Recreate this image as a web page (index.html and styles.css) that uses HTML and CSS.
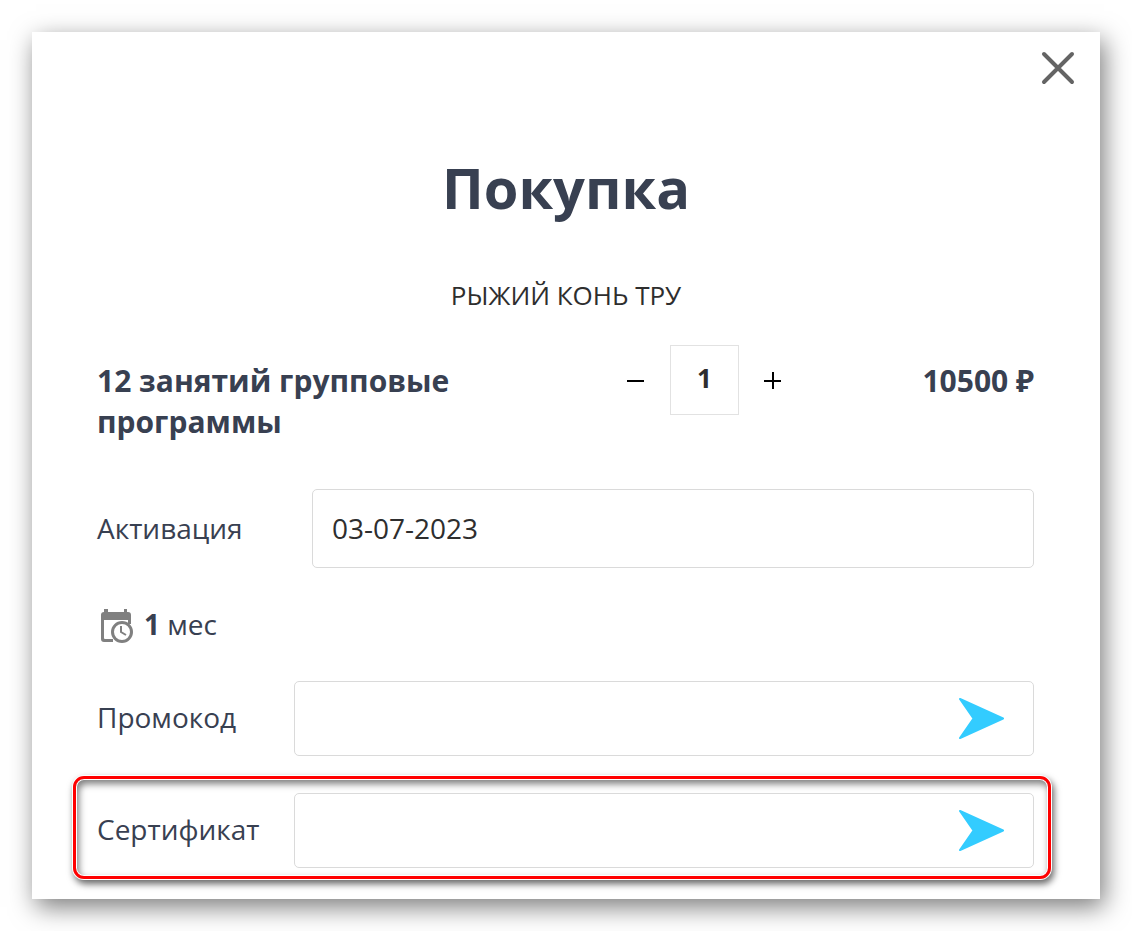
FILE: index.html
```html
<!DOCTYPE html>
<html lang="ru">
<head>
<meta charset="utf-8">
<meta name="viewport" content="width=device-width, initial-scale=1">
<title>Покупка</title>
<link rel="stylesheet" href="styles.css">
</head>
<body>
<main class="dialog">
  <header class="dialog-header">
    <button class="icon-button" type="button" aria-label="Закрыть">
      <svg width="34" height="34" viewBox="0 0 34 34" aria-hidden="true"><path d="M3 3 31 31M31 3 3 31" fill="none" stroke="#646464" stroke-width="4" stroke-linecap="round"/></svg>
    </button>
  </header>
  <h1 class="title">Покупка</h1>
  <p class="club">РЫЖИЙ КОНЬ ТРУ</p>
  <form class="form">
    <div class="product">
      <h2 class="product-name">12 занятий групповые программы</h2>
      <div class="quantity">
        <button class="icon-button" type="button" aria-label="Уменьшить">
          <svg width="18" height="18" viewBox="0 0 18 18" aria-hidden="true"><path d="M0 9h17v2H0z" fill="#000"/></svg>
        </button>
        <input class="quantity-input" type="text" inputmode="numeric" value="1" aria-label="Количество">
        <button class="icon-button" type="button" aria-label="Увеличить">
          <svg width="18" height="18" viewBox="0 0 18 18" aria-hidden="true"><path d="M0 9h8V1h2v8h7v2h-7v7H8v-7H0z" fill="#000"/></svg>
        </button>
      </div>
      <p class="price">10500 ₽</p>
    </div>
    <div class="field field-date">
      <label class="label" for="activation">Активация</label>
      <input class="box date-input" id="activation" type="text" value="03-07-2023">
    </div>
    <p class="period">
      <svg width="34" height="38" viewBox="0 0 34 38" aria-hidden="true">
        <path d="M4 2h4v3h16V2h3v3h1q3 0 3 3v9h-3v-4H4v18q0 1 1 1h8v3H4q-3 0-3-3V8q0-3 3-3z" fill="#808080"/>
        <circle cx="22" cy="25" r="9.500" fill="#fff" stroke="#808080" stroke-width="3"/>
        <path d="M21 19v6l5 3" fill="none" stroke="#808080" stroke-width="2"/>
      </svg>
      <span class="period-text"><b>1</b> мес</span>
    </p>
    <div class="field">
      <label class="label" for="promo">Промокод</label>
      <div class="box code-box">
        <input class="code-input" id="promo" type="text">
        <button class="icon-button" type="button" aria-label="Применить промокод">
          <svg width="46" height="42" viewBox="0 0 46 42" aria-hidden="true"><path d="M2 1 45 20.500 2 40 15.500 20.500z" fill="#33ccff" stroke="#33ccff" stroke-width="2" stroke-linejoin="round"/></svg>
        </button>
      </div>
    </div>
    <div class="field field-marked">
      <label class="label" for="certificate">Сертификат</label>
      <div class="box code-box">
        <input class="code-input" id="certificate" type="text">
        <button class="icon-button" type="button" aria-label="Применить сертификат">
          <svg width="46" height="42" viewBox="0 0 46 42" aria-hidden="true"><path d="M2 1 45 20.500 2 40 15.500 20.500z" fill="#33ccff" stroke="#33ccff" stroke-width="2" stroke-linejoin="round"/></svg>
        </button>
      </div>
    </div>
  </form>
</main>
</body>
</html>
```
FILE: styles.css
```css
* {
  box-sizing: border-box;
}

body {
  margin: 0;
  padding: 32px;
  background: #fff;
  color: #384051;
  font-family: "Open Sans", "Noto Sans", sans-serif;
  font-size: 28px;
  line-height: 40px;
}

h1,
h2,
p {
  margin: 0;
}

input {
  min-width: 0;
  font: inherit;
  color: #2e2e2e;
  outline: 0;
}

svg {
  display: block;
}

.dialog {
  padding-bottom: 31px;
  background: #fff;
  box-shadow: 4px 8px 24px rgba(0, 0, 0, 0.52);
}

.dialog-header {
  display: flex;
  justify-content: flex-end;
  padding: 19px 25px 64px;
}

.icon-button {
  flex: none;
  padding: 0;
  border: 0;
  background: none;
  cursor: pointer;
}

.title {
  font-size: 56px;
  font-weight: 700;
  line-height: 76px;
  text-align: center;
}

.club {
  margin-top: 52px;
  color: #2e2e2e;
  font-size: 26px;
  line-height: 36px;
  text-align: center;
}

.form {
  padding: 32px 66px 0 65px;
}

.product {
  display: grid;
  grid-template-columns: minmax(0, 1fr) auto 252px;
  min-height: 98px;
}

.product-name {
  max-width: 400px;
  padding-top: 15px;
  font-size: 30px;
  font-weight: 700;
  line-height: 41px;
}

.quantity {
  display: flex;
  align-items: center;
  gap: 25px;
  height: 70px;
}

.quantity-input {
  width: 69px;
  height: 70px;
  padding: 0 0 4px;
  border: 1px solid #e2e2e2;
  font-size: 26px;
  font-weight: 700;
  text-align: center;
}

.price {
  padding-top: 15px;
  font-size: 30px;
  font-weight: 700;
  line-height: 41px;
  text-align: right;
}

.field {
  position: relative;
  display: grid;
  grid-template-columns: 197px minmax(0, 1fr);
  align-items: center;
  margin-top: 37px;
}

.field-date {
  grid-template-columns: 215px minmax(0, 1fr);
  margin-top: 46px;
}

.label {
  padding-bottom: 4px;
}

.field-date .label {
  padding-bottom: 2px;
}

.box {
  border: 1px solid #dadada;
  border-radius: 5px;
  background: #fff;
}

.date-input {
  height: 79px;
  padding: 0 19px 2px;
}

.period {
  display: flex;
  align-items: center;
  gap: 10px;
  height: 40px;
  margin-top: 38px;
  padding-left: 3px;
}

.period-text {
  padding-bottom: 4px;
}

.period + .field {
  margin-top: 35px;
}

.code-box {
  display: flex;
  align-items: center;
  height: 75px;
  padding-right: 29px;
}

.code-input {
  flex: 1;
  height: 100%;
  padding: 0 19px;
  border: 0;
  background: none;
}

.field-marked::after {
  content: "";
  position: absolute;
  inset: -17px -17px -11px -24px;
  border: 3px solid #f00;
  border-radius: 11px;
  box-shadow:
    0 0 0 1px #fff,
    inset 0 0 0 1px #fff,
    2px 4px 7px 1px rgba(0, 0, 0, 0.6),
    inset 2px 4px 7px 1px rgba(0, 0, 0, 0.5);
  pointer-events: none;
}
```
